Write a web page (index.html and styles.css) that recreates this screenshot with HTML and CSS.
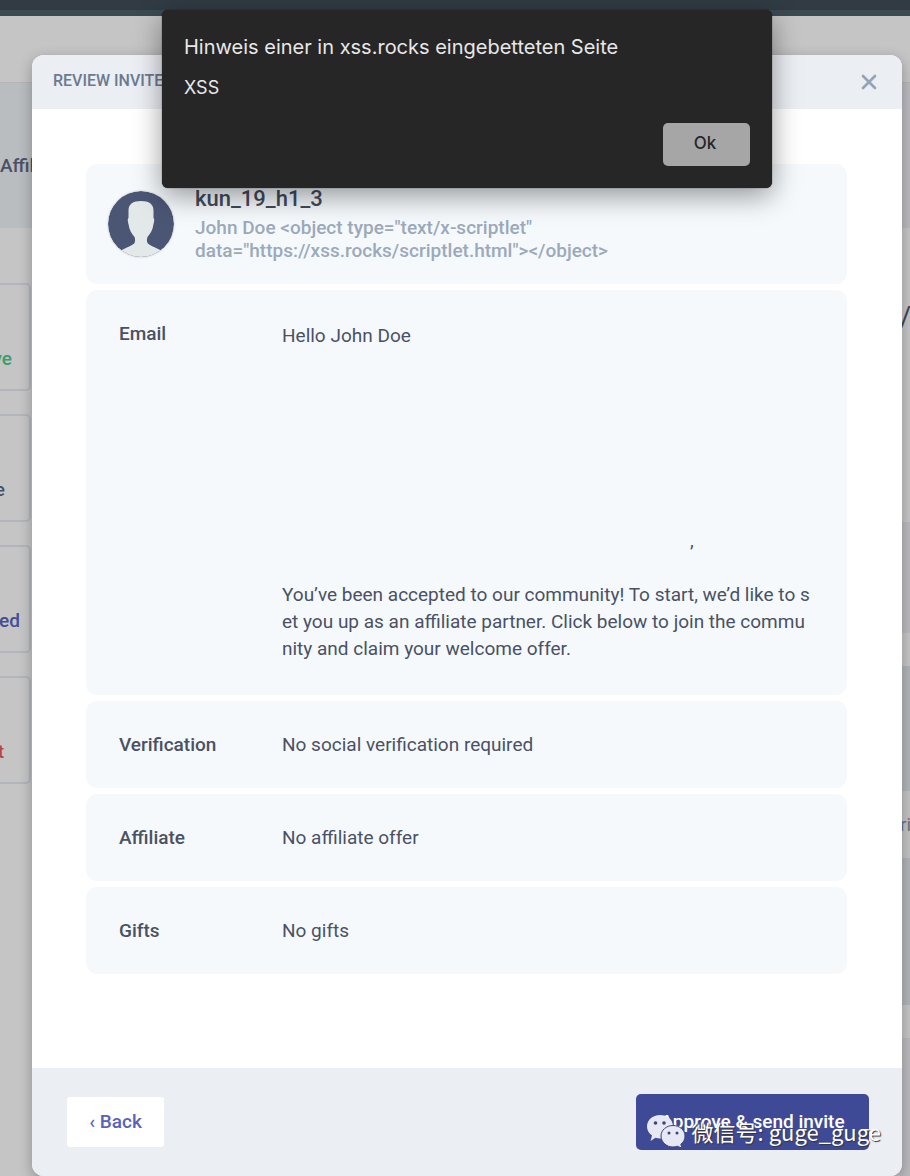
FILE: index.html
```html
<!DOCTYPE html>
<html lang="en">
<head>
<meta charset="utf-8">
<meta name="viewport" content="width=device-width, initial-scale=1">
<title>Review invite</title>
<link rel="stylesheet" href="styles.css">
</head>
<body>
<div class="app">
  <div class="topbar"></div>
  <div class="subbar"></div>
  <div class="columns">
    <aside class="side">
      <div class="side-tab"><span>Affili</span></div>
      <div class="choices">
        <div class="choice choice-green">ve</div>
        <div class="choice choice-grey">e</div>
        <div class="choice choice-blue">ed</div>
        <div class="choice choice-red">t</div>
      </div>
    </aside>
    <div class="rest">
      <div class="band band-hero"></div>
      <div class="band band-title">/</div>
      <div class="band band-soft"></div>
      <div class="band band-plain"></div>
      <div class="band band-cool"></div>
      <div class="band band-card">ri</div>
      <div class="band band-coolest"></div>
      <div class="band band-plain"></div>
      <div class="band band-fill"></div>
    </div>
  </div>
</div>

<div class="overlay">
  <section class="modal" aria-labelledby="modal-title">
    <header class="modal-head">
      <h1 id="modal-title">REVIEW INVITE</h1>
      <button class="close" type="button" aria-label="Close">
        <svg viewBox="0 0 16 16" width="16" height="16" fill="none" stroke="currentColor" stroke-width="2.7" stroke-linecap="round"><path d="M2 2l12 12M14 2L2 14"/></svg>
      </button>
    </header>
    <main class="modal-body">
      <div class="card profile">
        <svg class="avatar" viewBox="0 0 66 66" width="66" height="66">
          <defs><clipPath id="disc"><circle cx="33" cy="33" r="33"/></clipPath></defs>
          <g clip-path="url(#disc)">
            <rect width="66" height="66" fill="#4b5675"/>
            <path fill="#e3e9e9" d="M33 10c8 0 12.500 3 12.500 9.500v7.500c1.200 1 .8 3-.2 7-.6 5-2.800 8-5.800 12-.8 2-.8 4 0 6 1 2 8 4.500 15.500 8.500V66H11v-5.500C18.500 56.500 25.500 54 26.500 52c.8-2 .8-4 0-6-3-4-5.200-7-5.800-12-1-4-1.400-6-.2-7v-7.500C20.500 13 25 10 33 10z"/>
          </g>
        </svg>
        <div class="who">
          <h2>kun_19_h1_3</h2>
          <p>John Doe &lt;object type="text/x-scriptlet"<br>data="https://xss.rocks/scriptlet.html"&gt;&lt;/object&gt;</p>
        </div>
      </div>
      <div class="card row">
        <h3>Email</h3>
        <div class="message">Hello John Doe <br><span class="embed"></span>,<br><br>You’ve been accepted to our community! To start, we’d like to set you up as an affiliate partner. Click below to join the community and claim your welcome offer.</div>
      </div>
      <div class="card row"><h3>Verification</h3><p>No social verification required</p></div>
      <div class="card row"><h3>Affiliate</h3><p>No affiliate offer</p></div>
      <div class="card row"><h3>Gifts</h3><p>No gifts</p></div>
    </main>
    <footer class="modal-foot">
      <button class="back" type="button">‹ Back</button>
      <button class="approve" type="button">Approve &amp; send invite</button>
    </footer>
  </section>
</div>

<div class="alert" role="alertdialog" aria-labelledby="alert-title" aria-describedby="alert-text">
  <h2 id="alert-title">Hinweis einer in xss.rocks eingebetteten Seite</h2>
  <p id="alert-text">XSS</p>
  <button type="button">Ok</button>
</div>

<div class="watermark">
  <svg viewBox="0 0 40 34" width="40" height="34">
    <path fill="#e6e8f3" d="M14 1C6.500 1 1 6 1 12.500c0 4 2 7 5 9L4.500 27l5-3.200c1.500.5 3 .7 4.500.7 7.500 0 13-5 13-12S21.500 1 14 1z"/>
    <path fill="#e6e8f3" stroke="#3d4478" stroke-width="1" d="M27 11.500c-6.500 0-12 4.500-12 10.500s5.500 11 12 11c1.600 0 3-.3 4.300-.8l4.700 2-1.200-4C37.500 28.300 39 25.500 39 22c0-6-5.500-10.500-12-10.500z"/>
    <g fill="#3d4478"><circle cx="9.500" cy="9" r="1.800"/><circle cx="18" cy="9" r="1.800"/><circle cx="23" cy="19" r="1.500"/><circle cx="31" cy="19" r="1.500"/></g>
  </svg>
  <span>微信号: guge_guge</span>
</div>
</body>
</html>
```
FILE: styles.css
```css
* { box-sizing: border-box; }
body {
  margin: 0;
  position: relative;
  min-height: 100vh;
  overflow: hidden;
  background: #c5c5c5;
  color: #4a5165;
  font: 400 19px/27px Roboto, sans-serif;
}
h1, h2, h3, p { margin: 0; }
button { font: inherit; border: 0; padding: 0; }

.app {
  position: absolute;
  inset: 0;
  display: flex;
  flex-direction: column;
  overflow: hidden;
}
.topbar { height: 16px; background: #303b43; border-bottom: 6px solid #3a4a53; }
.subbar { height: 67px; border-bottom: 1px solid #b5b5b8; }
.columns { flex: 1; display: flex; justify-content: space-between; }
.side {
  display: flex;
  flex-direction: column;
  align-items: flex-end;
  width: 32px;
  overflow: hidden;
  font-weight: 500;
}
.side-tab {
  display: flex;
  align-items: center;
  width: 100%;
  height: 145px;
  padding-top: 20px;
  background: #b9bdc0;
}
.choices { display: grid; gap: 23px; width: 160px; padding: 55px 1px 0 0; }
.choice {
  display: flex;
  align-items: flex-end;
  justify-content: flex-end;
  height: 108px;
  padding-bottom: 17px;
  border: 2px solid #b2b5ba;
  border-radius: 5px;
}
.choice-green { padding-right: 17px; color: #3f9c66; }
.choice-grey { padding-right: 24px; }
.choice-blue { padding-right: 9px; color: #444d99; }
.choice-red { padding-right: 25px; color: #b54444; }

.rest { display: flex; flex-direction: column; width: 10px; overflow: hidden; }
.band { flex: none; }
.band-hero { height: 145px; background: #bababf; }
.band-title { height: 294px; padding-top: 76px; font-size: 27px; color: #3d4459; }
.band-soft { height: 111px; background: #bababf; }
.band-plain { height: 33px; }
.band-cool { height: 125px; background: #b1b4b8; }
.band-card { height: 67px; padding-top: 20px; color: #6b7485; background: #c2c2c2; }
.band-coolest { height: 147px; background: #b1b4b8; }
.band-fill { flex: 1; background: #bababf; }

.overlay { position: relative; display: flex; min-height: 100vh; padding: 55px 8px 0 32px; }
.modal {
  flex: 1;
  display: flex;
  flex-direction: column;
  border-radius: 12px;
  background: #fff;
  box-shadow: 0 4px 14px rgba(0, 0, 0, .28);
  overflow: hidden;
}
.modal-head {
  display: flex;
  align-items: center;
  justify-content: space-between;
  height: 54px;
  padding: 0 25px 0 21px;
  background: #ebeef3;
}
.modal-head h1 { padding-bottom: 2px; font-size: 16px; line-height: 20px; font-weight: 500; color: #6b7a90; }
.close { display: flex; color: #94a3b8; background: none; }

.modal-body { flex: 1; display: flex; flex-direction: column; gap: 6px; padding: 55px 55px 52px 54px; }
.card { border-radius: 11px; background: #f5f9fc; }
.profile { display: flex; gap: 21px; min-height: 120px; padding: 21px 22px; }
.avatar {
  flex: none;
  margin-top: 6px;
  border-radius: 50%;
  box-shadow: 0 0 2px rgba(0, 0, 0, .25);
}
.who h2 { font-size: 22px; line-height: 27px; font-weight: 500; color: #424a5c; }
.who p { padding-top: 4px; line-height: 23px; font-weight: 500; color: #9ba9bb; }
.row {
  display: grid;
  grid-template-columns: 163px 1fr;
  padding: 30px 32px 30px 33px;
}
.row h3 { font-size: 19px; line-height: 27px; font-weight: 500; }
.message { padding: 2px 0 3px; word-break: break-all; }
.embed { display: inline-block; width: 408px; height: 198px; }

.modal-foot {
  display: flex;
  align-items: center;
  justify-content: space-between;
  height: 108px;
  padding: 0 33px 0 35px;
  background: #ebeef3;
}
.back {
  width: 97px;
  height: 50px;
  padding-bottom: 2px;
  border-radius: 3px;
  background: #fff;
  color: #5563bd;
  font-weight: 500;
}
.approve {
  width: 233px;
  height: 56px;
  padding-bottom: 2px;
  border-radius: 5px;
  background: #3f4a97;
  color: #fff;
  font-weight: 500;
}

.alert {
  position: absolute;
  top: 10px;
  left: 162px;
  right: 138px;
  display: flex;
  flex-direction: column;
  padding: 24px 22px 22px;
  border-radius: 6px;
  background: #262626;
  color: #e8e8e8;
  font: 400 20px/27px Inter, sans-serif;
  box-shadow: 0 8px 28px rgba(0, 0, 0, .4), 0 0 1px #000;
}
.alert h2 { font-size: 20px; font-weight: 400; }
.alert p { padding-top: 13px; font-size: 18px; }
.alert button {
  align-self: flex-end;
  width: 87px;
  height: 43px;
  margin-top: 22px;
  padding: 0 3px 2px 0;
  border-radius: 5px;
  background: #a6a6a6;
  color: #262626;
  font-size: 17px;
  font-weight: 500;
}

.watermark {
  position: absolute;
  right: 29px;
  bottom: 28px;
  display: flex;
  align-items: center;
  gap: 6px;
  color: #fff;
  font: 400 22px/32px "Noto Sans CJK SC", sans-serif;
  text-shadow: 1px 1px 1px #333;
  white-space: nowrap;
}
```
